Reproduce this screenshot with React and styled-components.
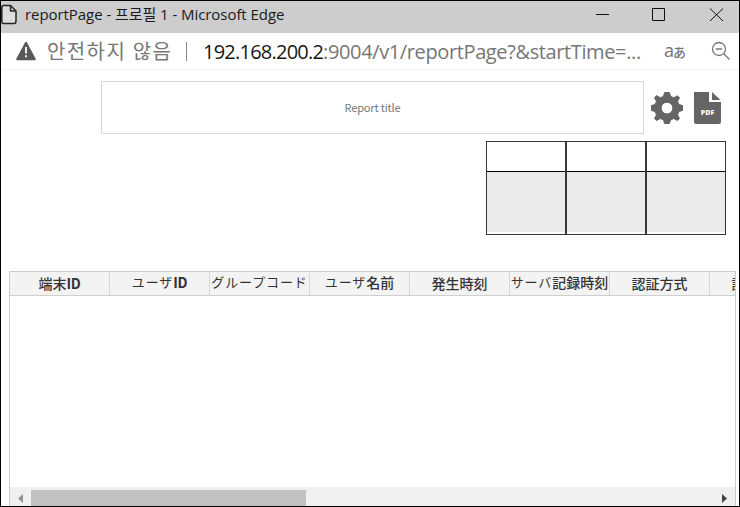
import React from "react";
import styled, { createGlobalStyle } from "styled-components";

const GlobalStyle = createGlobalStyle`
  * { box-sizing: border-box; }
  body { margin: 0; background: #fff; overflow: hidden; }
`;

const Window = styled.div`
  width: 740px;
  height: 507px;
  border: 1px solid #000;
  display: flex;
  flex-direction: column;
  overflow: hidden;
  background: #fff;
  font-family: "Open Sans", "Noto Sans CJK KR", sans-serif;
`;

const TitleBar = styled.header`
  height: 32px;
  flex: none;
  display: flex;
  align-items: center;
  background: #cdcdcd;
  color: #1b1b1b;
  padding-bottom: 4px;
`;

const PageIcon = styled.svg`
  width: 16px;
  height: 21px;
  flex: none;
  margin-top: -1px;
`;

const WindowTitle = styled.h1`
  margin: -2px 0 0 8px;
  flex: 1;
  font-size: 15px;
  font-weight: 400;
  line-height: 26px;
  letter-spacing: -0.06px;
  white-space: nowrap;
`;

const WindowControls = styled.svg`
  width: 149px;
  height: 28px;
  flex: none;
`;

const AddressBar = styled.div`
  height: 37px;
  flex: none;
  display: flex;
  align-items: center;
  border-bottom: 1px solid #f4f4f4;
  white-space: nowrap;
  color: #767676;
  font-size: 19px;
  line-height: 34px;
`;

const WarningIcon = styled.svg`
  width: 20px;
  height: 20px;
  margin: 0 11px 0 15px;
  flex: none;
`;

const Warning = styled.span`
  width: 139px;
  font-size: 20px;
  letter-spacing: 1.4px;
  padding-top: 2px;
  flex: none;
`;

const Separator = styled.span`
  width: 1px;
  height: 19px;
  background: #858585;
  margin-right: 16px;
  flex: none;
`;

const Url = styled.span`
  width: 461px;
  font-size: 20px;
  letter-spacing: -0.38px;
  padding-top: 1px;
  flex: none;
`;

const Host = styled.span`
  color: #171717;
  letter-spacing: -0.77px;
`;

const Translate = styled.span`
  font-family: "Open Sans", "Noto Sans CJK JP", sans-serif;
  font-size: 18px;
  width: 47px;
  flex: none;
  small { font-size: 13px; font-weight: 500; margin-left: -1px; }
`;

const ZoomIcon = styled.svg`
  width: 20px;
  height: 20px;
  flex: none;
`;

const ReportBar = styled.section`
  display: flex;
  align-items: center;
  margin: 11px 0 0 100px;
  height: 53px;
  flex: none;
`;

const ReportTitle = styled.div`
  width: 543px;
  height: 53px;
  border: 1px solid #d7d7d7;
  color: #777;
  font: 11px/51px "Noto Sans CJK JP", sans-serif;
  letter-spacing: -0.15px;
  text-align: center;
`;

const ActionIcon = styled.svg`
  width: 32px;
  height: 32px;
  flex: none;
  margin-left: ${(p) => p.$gap}px;
`;

const Approvals = styled.section`
  display: flex;
  align-self: flex-end;
  margin: 7px 13px 0 0;
  flex: none;
`;

const ApprovalBox = styled.div`
  width: 80px;
  height: 94px;
  border: 1px solid #373737;
  padding-bottom: 2px;
  display: flex;
  flex-direction: column;
`;

const ApprovalHead = styled.div`
  height: 30px;
  border-bottom: 1px solid #000;
`;

const ApprovalBody = styled.div`
  flex: 1;
  background: #ebebeb;
`;

const Grid = styled.section`
  width: 727px;
  margin: 36px 0 0 8px;
  flex: 1;
  display: flex;
  flex-direction: column;
  border: 1px solid #cbcbcb;
  border-bottom: 0;
  overflow: hidden;
`;

const GridHeader = styled.div`
  height: 24px;
  flex: none;
  display: flex;
  background: #f3f3f3;
  border-bottom: 1px solid #cfcfcf;
  overflow: hidden;
`;

const HeaderCell = styled.div`
  width: 100px;
  flex: none;
  border-right: 1px solid #d6d6d6;
  color: #333;
  font: 500 14px/${(p) => (p.$low ? 22 : 20)}px "Noto Sans CJK JP", sans-serif;
  display: flex;
  justify-content: center;
  white-space: nowrap;
  b { font-weight: 700; letter-spacing: -0.3px; }
`;

const Kana = styled.span`
  font-size: 13px;
  font-weight: 400;
  letter-spacing: 0.9px;
`;

const GridBody = styled.div`
  flex: 1;
`;

const Scrollbar = styled.div`
  height: 19px;
  flex: none;
  display: flex;
  align-items: flex-end;
  background: #f0f0f0;
`;

const Thumb = styled.div`
  width: 275px;
  height: 16px;
  background: #c1c1c1;
  margin-right: auto;
`;

const Arrow = styled.svg`
  width: 21px;
  height: 16px;
  fill: ${(p) => p.$color};
`;

const columns = [
  { kanji: "端末", latin: "ID", low: true },
  { kana: "ユーザ", latin: "ID" },
  { kana: "グループコード" },
  { kana: "ユーザ", kanji: "名前" },
  { kanji: "発生時刻", low: true },
  { kana: "サーバ", kanji: "記録時刻" },
  { kanji: "認証方式", low: true },
  { kanji: "認証結果", low: true },
];

export default function App() {
  return (
    <Window>
      <GlobalStyle />
      <TitleBar>
        <PageIcon viewBox="0 0 16 21" fill="#dedede" stroke="#242424" strokeWidth="1.5" strokeLinejoin="round">
          <path d="M0.8 3.5Q0.8 1.5 2.8 1.5H9.5L15 7V17Q15 19.5 13 19.5H2.8Q0.8 19.5 0.8 17.5Z" />
          <path d="M9.5 1.5V7H15" fill="none" />
        </PageIcon>
        <WindowTitle>reportPage - 프로필 1 - Microsoft Edge</WindowTitle>
        <WindowControls viewBox="0 0 149 28" fill="none" stroke="#111">
          <path d="M6 13.5H19M62.5 7.5H74.5V19.5H62.5ZM120 7.5L133 20M133 7.5L120 20" />
        </WindowControls>
      </TitleBar>
      <AddressBar>
        <WarningIcon viewBox="0 0 20 20">
          <path d="M10 1.7L18.8 18.2H1.2Z" fill="#595959" stroke="#595959" strokeWidth="2" strokeLinejoin="round" />
          <path d="M10 6V12.5M10 14.2V16.2" stroke="#fff" strokeWidth="1.8" />
        </WarningIcon>
        <Warning>안전하지 않음</Warning>
        <Separator />
        <Url>
          <Host>192.168.200.2</Host>:9004/v1/reportPage?&amp;startTime=...
        </Url>
        <Translate>a<small>あ</small></Translate>
        <ZoomIcon viewBox="0 0 20 20" fill="none" stroke="#757575" strokeWidth="1.3">
          <circle cx="8" cy="8" r="6.5" />
          <path d="M4.8 8H11.2M12.7 12.7L18.5 18.5" />
        </ZoomIcon>
      </AddressBar>
      <ReportBar>
        <ReportTitle>Report title</ReportTitle>
        <ActionIcon $gap={7} viewBox="0 0 32 32">
          <path
            fill="#656565"
            stroke="#656565"
            strokeWidth="1"
            strokeLinejoin="round"
            fillRule="evenodd"
            d="M13.5 0.5H18.5L19.5 4.3L22.8 5.7L26.5 3.8L28.5 5.8L26.5 9.3L27.9 12.6L31.5 13.5V18.5L27.9 19.6L26.5 22.9L28.5 26.4L26.4 28.5L22.7 26.5L19.5 27.9L18.5 31.5H13.5L12.6 27.9L9.3 26.5L5.6 28.5L3.5 26.4L5.5 22.9L4.1 19.6L0.5 18.5V13.5L4.1 12.6L5.5 9.3L3.5 5.8L5.6 3.6L9.3 5.7L12.6 4.3ZM16 10.2A5.9 5.9 0 1 0 16 22A5.9 5.9 0 1 0 16 10.2Z"
          />
        </ActionIcon>
        <ActionIcon $gap={9} viewBox="0 0 32 32" fill="#656565">
          <path d="M2 0H17V10H29V29.5Q29 32 26.5 32H4.5Q2 32 2 29.5ZM20 0L28.5 8H20Z" />
          <text x="15.5" y="22.5" fill="#fff" fontFamily="Open Sans, sans-serif" fontSize="7" fontWeight="800" textAnchor="middle">PDF</text>
        </ActionIcon>
      </ReportBar>
      <Approvals>
        {[0, 1, 2].map((n) => (
          <ApprovalBox key={n}>
            <ApprovalHead />
            <ApprovalBody />
          </ApprovalBox>
        ))}
      </Approvals>
      <Grid>
        <GridHeader>
          {columns.map((c, i) => (
            <HeaderCell key={i} $low={c.low}>
              {c.kana && <Kana>{c.kana}</Kana>}
              {c.kanji}
              {c.latin && <b>{c.latin}</b>}
            </HeaderCell>
          ))}
        </GridHeader>
        <GridBody />
        <Scrollbar>
          <Arrow $color="#939393" viewBox="0 0 21 16"><path d="M13 4V13L8 8.5Z" /></Arrow>
          <Thumb />
          <Arrow $color="#444" viewBox="0 0 21 16"><path d="M8 4V13L13 8.5Z" /></Arrow>
        </Scrollbar>
      </Grid>
    </Window>
  );
}
